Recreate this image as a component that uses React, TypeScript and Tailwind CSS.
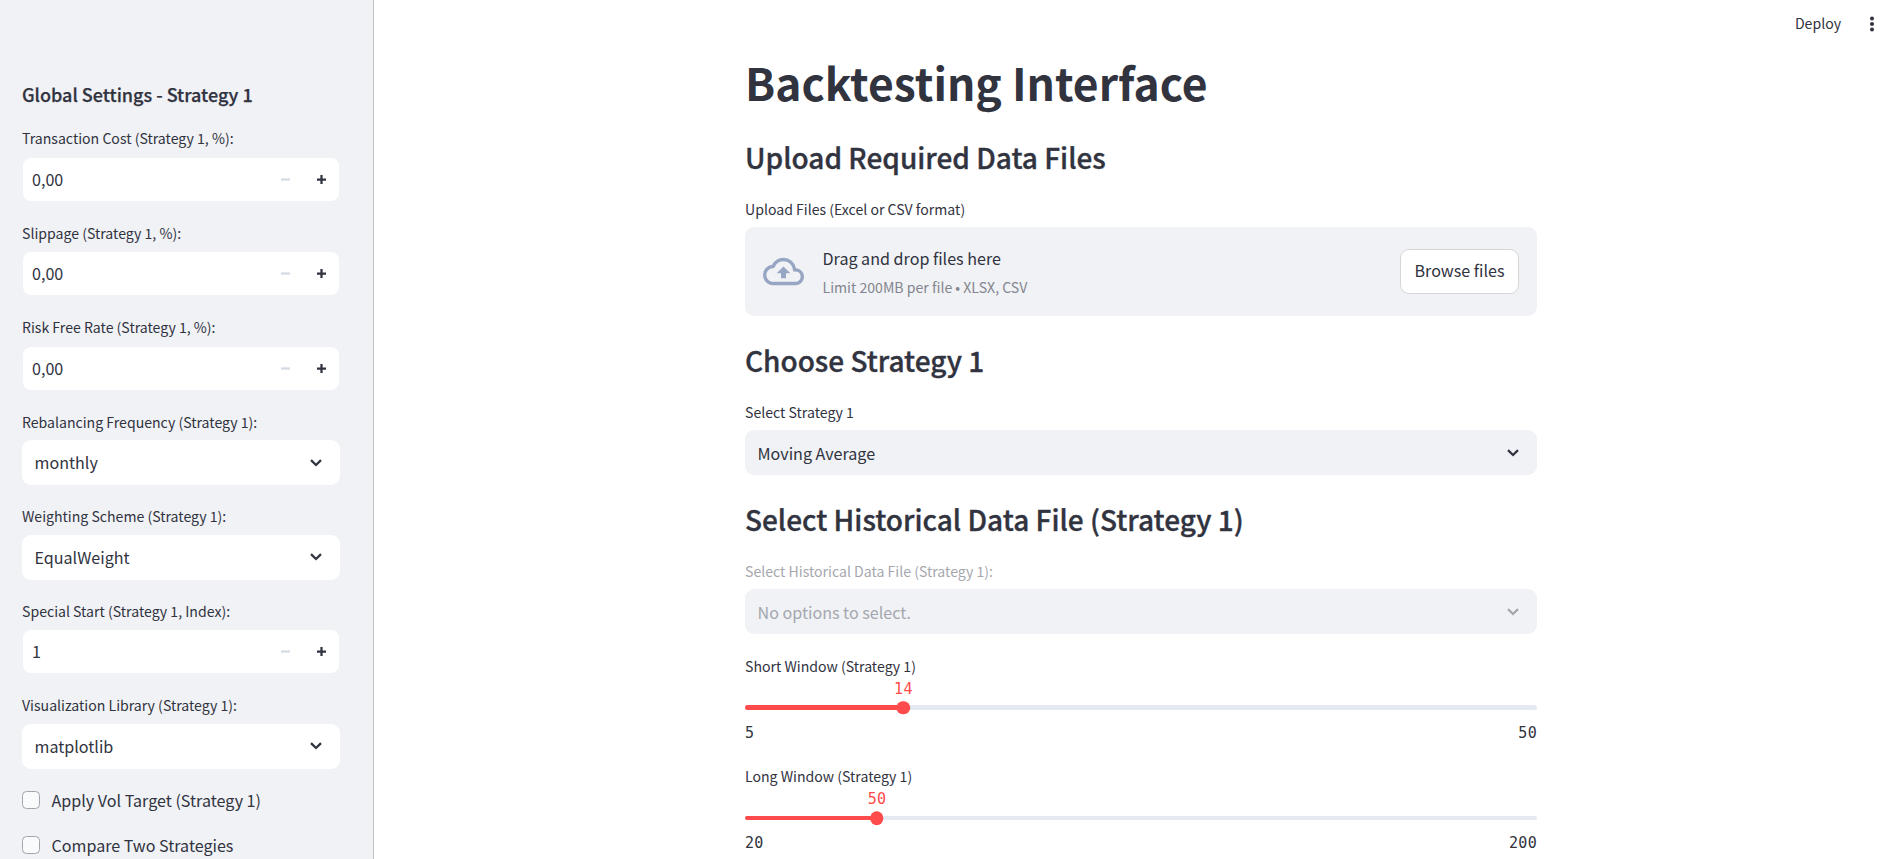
import { MdOutlineCloudUpload } from "react-icons/md";

function Chevron({ muted }: { muted?: boolean }) {
  return (
    <svg viewBox="0 0 12 8" className={`h-2 w-3 shrink-0 ${muted ? "text-[#a6a7ae]" : "text-[#31333f]"}`}>
      <path d="M1 1.2 6 6 11 1.2" fill="none" stroke="currentColor" strokeWidth="2.3" />
    </svg>
  );
}

function Label({ text, muted }: { text: string; muted?: boolean }) {
  return (
    <div className={`mb-[4.5px] flex h-[27px] items-center text-[14.1px] leading-none ${muted ? "text-[#a6a7ae]" : ""}`}>
      <span>{text}</span>
    </div>
  );
}

function NumberInput({ label, value }: { label: string; value: string }) {
  return (
    <div>
      <Label text={label} />
      <div className="flex h-[45px] items-center rounded-[9px] border border-[#f0f2f6] bg-white pr-[13px] pl-[9px] text-[16.1px] leading-none">
        <span className="grow">{value}</span>
        <svg viewBox="0 0 8 8" className="size-[9px] text-[#d5dae5]">
          <path d="M0 3h8v2H0z" fill="currentColor" />
        </svg>
        <svg viewBox="0 0 8 8" className="ml-[27px] size-[9px]">
          <path d="M3 0v3H0v2h3v3h2V5h3V3H5V0z" fill="currentColor" />
        </svg>
      </div>
    </div>
  );
}

function Select({ label, value, muted, fill }: { label: string; value: string; muted?: boolean; fill: string }) {
  return (
    <div>
      <Label text={label} muted={muted} />
      <div className={`flex h-[45px] items-center justify-between rounded-[9px] pr-[18px] pl-[12.5px] text-[16.1px] leading-none ${fill} ${muted ? "text-[#a6a7ae]" : ""}`}>
        <span>{value}</span>
        <Chevron muted={muted} />
      </div>
    </div>
  );
}

function Checkbox({ label }: { label: string }) {
  return (
    <div className="flex h-[27px] items-center gap-[11.5px]">
      <span className="size-[18px] rounded-[4.5px] border border-[#a3a4ac] bg-[#f9fafc]" />
      <span className="text-[16.1px] leading-none">{label}</span>
    </div>
  );
}

function Slider({ label, min, max, value }: { label: string; min: number; max: number; value: number }) {
  const percent = ((value - min) / (max - min)) * 100;
  return (
    <div>
      <Label text={label} />
      <div className="relative mt-[26px] h-[4.5px] rounded-full bg-[#e5e9f1]">
        <div className="h-full rounded-full bg-[#ff4b4b]" style={{ width: `${percent}%` }} />
        <div className="absolute top-1/2 size-[13.5px] -translate-1/2 rounded-full bg-[#ff4b4b]" style={{ left: `${percent}%` }} />
        <div
          className="absolute bottom-[13px] -translate-x-1/2 font-['DejaVu_Sans_Mono',monospace] text-[15px] leading-none tracking-[0.3px] text-[#ff4b4b]"
          style={{ left: `${percent}%` }}
        >
          {value}
        </div>
      </div>
      <div className="mt-[10.5px] flex h-[24.5px] items-center justify-between pt-[1px] font-['DejaVu_Sans_Mono',monospace] text-[15px] leading-none tracking-[0.3px]">
        <span>{min}</span>
        <span>{max}</span>
      </div>
    </div>
  );
}

function SectionTitle({ children }: { children: string }) {
  return (
    <h3 className="mb-[-18px] h-[64.8px] pt-[8px] text-[28px] leading-[37.8px] font-medium [-webkit-text-stroke:0.35px_#31333f]">
      {children}
    </h3>
  );
}

export default function App() {
  return (
    <div className="flex h-[859px] w-full overflow-hidden bg-white font-['Noto_Sans_CJK_JP',sans-serif] text-[#31333f]">
      <aside className="w-[374px] shrink-0 border-r border-[#c0c2c8] bg-[#f0f2f6] pt-[81px] pr-[33px] pl-[22px]">
        <h2 className="mb-[17px] h-[27px] text-[18px] leading-[27px] font-medium [-webkit-text-stroke:0.25px_#31333f]">Global Settings - Strategy 1</h2>
        <div className="flex flex-col gap-[18px]">
          <NumberInput label="Transaction Cost (Strategy 1, %):" value="0,00" />
          <NumberInput label="Slippage (Strategy 1, %):" value="0,00" />
          <NumberInput label="Risk Free Rate (Strategy 1, %):" value="0,00" />
          <Select label="Rebalancing Frequency (Strategy 1):" value="monthly" fill="bg-white" />
          <Select label="Weighting Scheme (Strategy 1):" value="EqualWeight" fill="bg-white" />
          <NumberInput label="Special Start (Strategy 1, Index):" value="1" />
          <Select label="Visualization Library (Strategy 1):" value="matplotlib" fill="bg-white" />
          <Checkbox label="Apply Vol Target (Strategy 1)" />
          <Checkbox label="Compare Two Strategies" />
        </div>
      </aside>
      <main className="grow">
        <header className="flex h-[47px] items-center justify-end gap-[26px] pr-[19px] text-[14.1px] leading-none">
          <span>Deploy</span>
          <svg viewBox="0 0 10 18" className="h-[18px] w-[10px]">
            <circle cx="5" cy="3.4" r="2" fill="currentColor" />
            <circle cx="5" cy="9" r="2" fill="currentColor" />
            <circle cx="5" cy="14.6" r="2" fill="currentColor" />
          </svg>
        </header>
        <div className="ml-[371px] flex w-[792px] flex-col gap-[18px]">
          <h1 className="h-[65.8px] text-[44.4px] leading-[70px] font-bold">Backtesting Interface</h1>
          <SectionTitle>Upload Required Data Files</SectionTitle>
          <div>
            <Label text="Upload Files (Excel or CSV format)" />
            <div className="flex h-[88.8px] items-center rounded-[9px] bg-[#f0f2f6] px-[18px]">
              <MdOutlineCloudUpload className="mr-[18.5px] size-[41px] text-[#97a6c3]" />
              <div className="flex grow flex-col pt-[2px]">
                <span className="text-[16.1px] leading-[29px]">Drag and drop files here</span>
                <span className="text-[14.1px] leading-[28px] text-[#84858e]">Limit 200MB per file • XLSX, CSV</span>
              </div>
              <button className="h-[45px] w-[119px] rounded-[9px] border border-[#d6d6d9] bg-white pb-[3px] text-[16.1px] leading-none">Browse files</button>
            </div>
          </div>
          <SectionTitle>Choose Strategy 1</SectionTitle>
          <Select label="Select Strategy 1" value="Moving Average" fill="bg-[#f0f2f6]" />
          <SectionTitle>Select Historical Data File (Strategy 1)</SectionTitle>
          <Select label="Select Historical Data File (Strategy 1):" value="No options to select." fill="bg-[#f0f2f6]" muted />
          <Slider label="Short Window (Strategy 1)" min={5} max={50} value={14} />
          <Slider label="Long Window (Strategy 1)" min={20} max={200} value={50} />
        </div>
      </main>
    </div>
  );
}
